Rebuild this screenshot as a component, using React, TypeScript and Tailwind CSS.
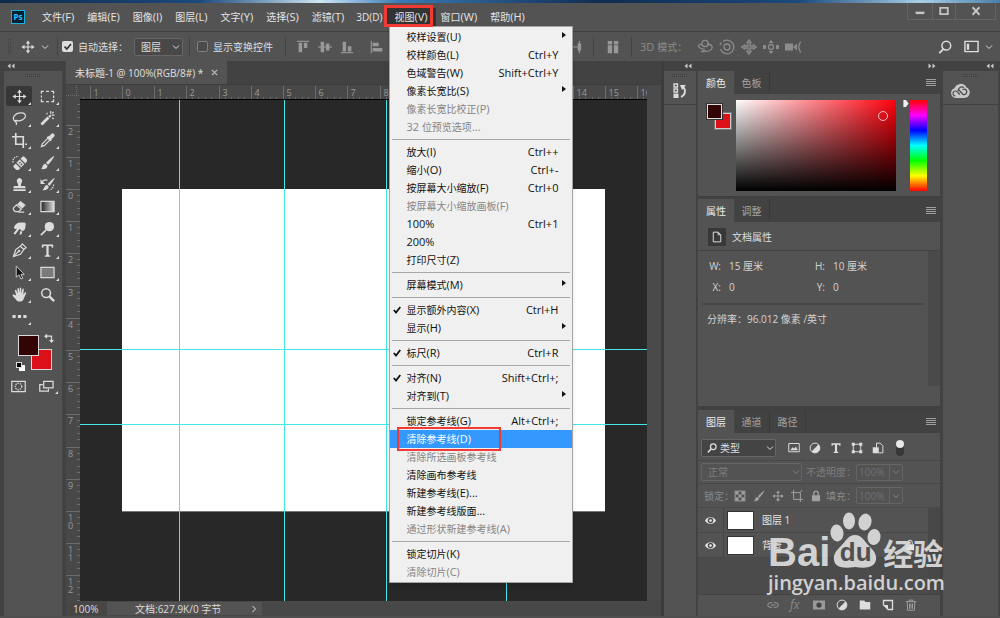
import React from "react";

type Kids = { children?: React.ReactNode };

const Ic = ({ s = "size-4", children }: Kids & { s?: string }) => (
  <svg viewBox="0 0 16 16" className={`${s} shrink-0`} fill="none" stroke="currentColor" strokeWidth="1.3" aria-hidden="true">
    {children}
  </svg>
);

const Chevron = ({ className = "" }: { className?: string }) => (
  <svg viewBox="0 0 8 6" className={`h-[6px] w-2 shrink-0 ${className}`} fill="none" stroke="currentColor" aria-hidden="true">
    <path d="M1 1.500 4 4.500 7 1.500" />
  </svg>
);

const DoubleChevron = ({ right = false }: { right?: boolean }) => (
  <svg viewBox="0 0 8 6" className={`h-[6px] w-2 text-[#c8c8c8] ${right ? "rotate-180" : ""}`} fill="currentColor" aria-hidden="true">
    <path d="M3.500 0.500v5L.5 3zM7.500 .5v5L4.500 3z" />
  </svg>
);

const Burger = () => (
  <button aria-label="面板菜单" className="text-[#a0a0a0]">
    <svg viewBox="0 0 10 8" className="h-2 w-[10px]" stroke="currentColor" aria-hidden="true">
      <path d="M0 .5h10M0 2.500h10M0 4.500h10M0 6.500h10" />
    </svg>
  </button>
);

const Grip = () => (
  <div className="flex h-[6px] items-end justify-center text-[#3e3e3e]">
    <svg viewBox="0 0 16 3" className="h-[3px] w-4" stroke="currentColor" strokeDasharray="1 1" aria-hidden="true">
      <path d="M0 .5h16M0 2.500h16" />
    </svg>
  </div>
);

const moveIcon = (
  <>
    <path d="M8 3v10M3 8h10" />
    <path d="M8 .5 5.500 4h5zM8 15.500 5.500 12h5zM.5 8 4 5.500v5zM15.500 8 12 5.500v5z" fill="currentColor" stroke="none" />
  </>
);

const solid = { fill: "currentColor", stroke: "none" } as const;

const tools: { name: string; more?: boolean; icon: React.ReactNode }[] = [
  { name: "移动工具", icon: moveIcon },
  { name: "矩形选框工具", icon: <path d="M1.500 5V2.500H4M6.500 2.500h3M12 2.500h2.500V5M14.500 7v2.500M14.500 11v2.500H12M9.500 13.500h-3M4 13.500H1.500V11M1.500 9V7" /> },
  { name: "套索工具", icon: <path d="M4.500 11.500C1 10.500.5 7 3 4.500s8-3.500 10.500-1.500c2 2 .5 5-2.500 6.500-2 1-4.500 1.500-6.500.5-1.500-.5-2 1-1 1.500s2 .5 1 3.500" /> },
  { name: "魔棒工具", icon: <><path d="M1.500 14.500 9 7" strokeWidth="3" /><path d="m9.500 6.500 2-2" strokeWidth="2" /><path d="M11.500 0v3M15.500 4.500h-3M14.500 1l-1.500 1.500M7 2l1 1.500M13 7l1.500 1.500" /></> },
  { name: "裁剪工具", icon: <path d="M4 0v12h8.500M0 4h12v12M14 12h2" strokeWidth="1.800" /> },
  { name: "吸管工具", icon: <><path d="M9 5 2.500 11.500 1.500 14.500l3-1L11 7" /><path d="m8 4 4 4" strokeWidth="2.200" /><path d="m10.500 5.500 3-3" strokeWidth="4" strokeLinecap="round" /></> },
  { name: "修复画笔工具", icon: <><g transform="rotate(-45 9 9)"><rect x="1" y="5.500" width="16" height="7" rx="1.500" {...solid} /><path d="M6 5.500v7M12 5.500v7" stroke="#535353" /><path d="M8 8h2M8 10.500h2" stroke="#535353" /></g><path d="M1 8C.5 4 3 1.500 7 1.500" strokeDasharray="1.500 1" /></> },
  { name: "画笔工具", icon: <><path d="M15 1.200c.5.5-4 6.800-6.500 9.300L6.500 8.500C9 5.500 14.500.7 15 1.200z" {...solid} /><path d="M5.800 9.200 8 11.400c0 3-3 4-7 3.600 2-1 1.500-5.800 4.800-5.800z" {...solid} /></> },
  { name: "仿制图章工具", icon: <path d="M8 1a3 3 0 0 1 2.500 4.500L9.500 8v1.500H13c1 0 1.500.5 1.500 2.500h-13c0-2 .5-2.500 1.500-2.500h3.500V8l-1-2.500A3 3 0 0 1 8 1zM1.500 13h13v2h-13z" {...solid} /> },
  { name: "历史记录画笔工具", icon: <><path d="M15.500 1c.5.5-3 6-5.500 8.500L8 7.500C10.500 5 15 .5 15.500 1zM7.500 8.500l1.800 1.800C9 13 6 14.500 2.500 14c2-1 2-5 5-5.500z" {...solid} /><path d="M8 3.500C5 2.500 3 3.500 2 5.500" /><path d="M.5 2.500v5h5z" {...solid} /><path d="M14.500 8c0 3-2 5-4.500 6" strokeDasharray="1.500 1" /></> },
  { name: "橡皮擦工具", icon: <><path d="m9 2 5.500 4.500L11 10 5.500 5.500z" {...solid} /><path d="M4.800 6.300 10 10.700 7 13.500H3.500L1.500 11.500v-2z" /><path d="M7 14h6" /></> },
  { name: "渐变工具", icon: <><defs><linearGradient id="tool-grad"><stop stopColor="#222" /><stop offset="1" stopColor="#ddd" /></linearGradient></defs><rect x="1" y="2.500" width="14" height="11" fill="url(#tool-grad)" /></> },
  { name: "涂抹工具", icon: <path d="M2.500 5.500C4 3 6 1.500 9 1.500h4c1.500 0 2 1.500 1.500 3L14 8c-.5 2-2 3-3.500 2.500L8 8.500l-4.500 6-2-1L5.500 8l-1 .5C3 9 1.500 7.500 2.500 5.500zM9 10.500l2 1-1 3H8z" {...solid} /> },
  { name: "减淡工具", icon: <><circle cx="10" cy="6" r="5" {...solid} /><path d="M6.500 9.500 1 15" strokeWidth="1.800" /></> },
  { name: "钢笔工具", icon: <><path d="M1.500 14.500 4 7l5-3.500 3.500 3.500L9 12zM9 3.500 11 1l4 4-2.500 2" /><path d="M1.500 14.500 7 9" /><circle cx="7.500" cy="8.500" r="1.300" {...solid} /></> },
  { name: "文字工具", icon: <path d="M2 1.500h12V5h-1.300L12 3.300H9.200v9.500l1.800.7v1.200H5v-1.200l1.800-.7V3.300H4L3.300 5H2z" {...solid} /> },
  { name: "路径选择工具", icon: <path d="M4.500 1v12l3-2.500 2 4.500 2-1-2-4h3.500z" fill="#141414" stroke="#cfcfcf" strokeWidth="1" /> },
  { name: "矩形工具", icon: <rect x="1" y="2.500" width="14" height="11" fill="#7b7b7b" /> },
  { name: "抓手工具", icon: <path d="M4.500 9 3.200 4.200c-.3-1.200 1.200-1.600 1.600-.5L6 7 5.700 2c0-1.300 1.600-1.300 1.700 0L7.800 6.500 8.200 1.500c.1-1.200 1.700-1.200 1.700 0V6.800l1.100-4.500c.3-1.100 1.800-.8 1.600.4L12 8.200l1.500-2c.7-1 2-.3 1.500.8L12.500 12.500C11.500 15 10.500 15.500 8 15.500c-2 0-3-.8-4-2.500L.8 9.500c-.8-1 .6-2 1.600-1.200z" {...solid} /> },
  { name: "缩放工具", more: false, icon: <><circle cx="6.500" cy="6.500" r="4.700" strokeWidth="1.600" /><path d="m10 10 5 5" strokeWidth="2.600" /></> },
  { name: "编辑工具栏", icon: <path d="M.5 6.300h3.400v3.400H.5zM6.300 6.300h3.400v3.400H6.300zM12.100 6.300h3.400v3.400h-3.400z" {...solid} /> },
];

type Item = { label?: string; mnemonic?: string; latin?: string; keys?: string; sub?: boolean; off?: boolean; check?: boolean; on?: boolean };

const viewMenu: (Item | null)[] = [
  { label: "校样设置", mnemonic: "(U)", sub: true },
  { label: "校样颜色", mnemonic: "(L)", keys: "Ctrl+Y" },
  { label: "色域警告", mnemonic: "(W)", keys: "Shift+Ctrl+Y" },
  { label: "像素长宽比", mnemonic: "(S)", sub: true },
  { label: "像素长宽比校正", mnemonic: "(P)", off: true },
  { latin: "32 ", label: "位预览选项", mnemonic: "...", off: true },
  null,
  { label: "放大", mnemonic: "(I)", keys: "Ctrl++" },
  { label: "缩小", mnemonic: "(O)", keys: "Ctrl+-" },
  { label: "按屏幕大小缩放", mnemonic: "(F)", keys: "Ctrl+0" },
  { label: "按屏幕大小缩放画板", mnemonic: "(F)", off: true },
  { latin: "100%", keys: "Ctrl+1" },
  { latin: "200%" },
  { label: "打印尺寸", mnemonic: "(Z)" },
  null,
  { label: "屏幕模式", mnemonic: "(M)", sub: true },
  null,
  { label: "显示额外内容", mnemonic: "(X)", keys: "Ctrl+H", check: true },
  { label: "显示", mnemonic: "(H)", sub: true },
  null,
  { label: "标尺", mnemonic: "(R)", keys: "Ctrl+R", check: true },
  null,
  { label: "对齐", mnemonic: "(N)", keys: "Shift+Ctrl+;", check: true },
  { label: "对齐到", mnemonic: "(T)", sub: true },
  null,
  { label: "锁定参考线", mnemonic: "(G)", keys: "Alt+Ctrl+;" },
  { label: "清除参考线", mnemonic: "(D)", on: true },
  { label: "清除所选画板参考线", off: true },
  { label: "清除画布参考线" },
  { label: "新建参考线", mnemonic: "(E)..." },
  { label: "新建参考线版面", mnemonic: "..." },
  { label: "通过形状新建参考线", mnemonic: "(A)", off: true },
  null,
  { label: "锁定切片", mnemonic: "(K)" },
  { label: "清除切片", mnemonic: "(C)", off: true },
];

const ViewMenu = () => (
  <div role="menu" className="absolute top-full left-px z-20 w-[184px] border border-[#a5a5a5] bg-[#f0f0f0] py-px text-[#111] shadow-md">
    {viewMenu.map((it, i) =>
      it === null ? (
        <div key={i} role="separator" className="flex h-[7px] items-center px-[2px]">
          <div className="h-px w-full bg-[#a8a8a8]" />
        </div>
      ) : (
        <button
          key={i}
          role="menuitem"
          disabled={it.off}
          className={`relative flex h-[18px] w-full items-center pr-[14px] pl-4 text-left ${it.on ? "bg-[#3399ff] text-white" : it.off ? "text-[#858585]" : ""}`}
        >
          {it.check && (
            <svg viewBox="0 0 8 8" className="absolute left-[3px] size-2" fill="none" stroke="currentColor" strokeWidth="1.8" aria-hidden="true">
              <path d="M.8 4 3 6.500 7.300 1" />
            </svg>
          )}
          <span className="flex-1 whitespace-nowrap">
            {it.latin && <span className="text-[11px]">{it.latin}</span>}
            {it.label}
            {it.mnemonic && <span className="text-[11px]">{it.mnemonic}</span>}
          </span>
          {it.keys && <span className="text-[11px] whitespace-nowrap">{it.keys}</span>}
          {it.sub && (
            <svg viewBox="0 0 4 6" className="absolute top-[4px] right-[6px] h-[6px] w-1" fill="currentColor" aria-hidden="true">
              <path d="M0 0v6l4-3z" />
            </svg>
          )}
          {it.on && <span className="absolute -inset-y-[3px] left-[7px] z-10 w-[104px] border-2 border-[#f23a34]" />}
        </button>
      ),
    )}
  </div>
);

const menus: [string, string][] = [
  ["文件", "(F)"], ["编辑", "(E)"], ["图像", "(I)"], ["图层", "(L)"], ["文字", "(Y)"], ["选择", "(S)"],
  ["滤镜", "(T)"], ["", "3D(D)"], ["视图", "(V)"], ["窗口", "(W)"], ["帮助", "(H)"],
];

const TitleBar = () => (
  <header className="flex h-7 items-center bg-[#535353] pl-[11px] text-[#e4e4e4]">
    <div className="flex size-[14px] items-center justify-center border border-[#19b3e0] bg-[#06202e] text-[8px] font-bold text-[#26c9ff]">Ps</div>
    <nav className="ml-[11px] flex gap-px">
      {menus.map(([cjk, key]) => (
        <div key={key} className="relative">
          <button className={`flex h-[18px] items-center whitespace-nowrap ${cjk === "视图" ? "-mx-[3px] bg-[#333] px-[9px]" : cjk ? "px-[6px]" : "px-[5px]"}`}>
            {cjk}
            <span className={cjk ? "text-[11px]" : "text-[10px]"}>{key}</span>
          </button>
          {cjk === "视图" && (
            <>
              <ViewMenu />
              <span className="pointer-events-none absolute -top-[3px] right-0 -bottom-px -left-1 z-30 border-3 border-[#f23a34]" />
            </>
          )}
        </div>
      ))}
    </nav>
    <div className="mr-1 ml-auto flex h-[17px] self-start border border-t-0 border-[#646464] text-[#c4c4c4]">
      <button aria-label="最小化" className="flex w-6 items-center justify-center"><Ic s="size-[10px]"><path d="M1 11h14" strokeWidth="4" /></Ic></button>
      <button aria-label="最大化" className="flex w-6 items-center justify-center border-x border-[#646464]"><Ic s="size-[10px]"><path d="M2 3h12v10H2z" strokeWidth="3" /></Ic></button>
      <button aria-label="关闭" className="flex w-[39px] items-center justify-center"><Ic s="size-[10px]"><path d="m2.500 2 11 12M13.500 2l-11 12" strokeWidth="3" /></Ic></button>
    </div>
  </header>
);

const alignIcons: React.ReactNode[] = [
  <path d="M1 1.500h14" />,
  <path d="M0 8h16" />,
  <path d="M1 14.500h14" />,
  <path d="M1.500 1v14" />,
  <path d="M8 0v16" />,
  <path d="M14.500 1v14" />,
  <path d="M1 1.500h14M1 8h14" />,
  <path d="M1 8h14M1 14h14" />,
  <path d="M1.500 1v14M8 1v14" />,
  <path d="M3 1v14M13 1v14M3 8h10" />,
];
const alignBars: string[] = [
  "M3 3h4v11H3zM9 3h4v6H9z", "M3 2h4v12H3zM9 4h4v8H9z", "M3 2h4v11H3zM9 7h4v6H9z",
  "M3 3h7v4H3zM3 9h11v4H3z", "M4 2h8v4H4zM2 9h12v4H2z", "M6 3h7v4H6zM2 9h11v4H2z",
  "M4 3h8v3H4zM4 10h8v3H4z", "M4 3h8v3H4zM4 10h8v3H4z", "M3 4h3v8H3zM10 4h3v8h-3z", "M1 4h4v8H1zM11 4h4v8h-4z",
];
const AlignIcon = ({ i }: { i: number }) => (
  <button aria-label={`对齐方式 ${i + 1}`}>
    <Ic s="size-[14px]">
      {alignIcons[i]}
      <path d={alignBars[i]} {...solid} />
    </Ic>
  </button>
);

const Divider = () => <div className="h-5 w-px bg-[#434343]" />;

const OptionsBar = () => (
  <div className="flex h-[30px] items-center border-t border-[#404040] bg-[#535353] pl-2 text-[#dedede]">
    <svg viewBox="0 0 3 16" className="h-4 w-[3px] text-[#404040]" stroke="currentColor" strokeDasharray="1 1" aria-hidden="true"><path d="M.5 0v16M2.500 0v16" /></svg>
    <span className="ml-[10px]"><Ic s="size-[14px]">{moveIcon}</Ic></span>
    <Chevron className="mr-2 ml-[6px]" />
    <Divider />
    <label className="ml-1 flex items-center gap-[5px] whitespace-nowrap">
      <span className="relative flex size-[11px]">
        <input type="checkbox" defaultChecked className="size-[11px] appearance-none rounded-xs bg-[#dcdcdc]" />
        <svg viewBox="0 0 11 11" className="pointer-events-none absolute inset-0 size-[11px]" fill="none" stroke="#333" strokeWidth="1.700" aria-hidden="true"><path d="m2.500 5.500 2.300 2.500L9 3" /></svg>
      </span>
      自动选择：
    </label>
    <span className="relative ml-[6px] flex items-center">
      <select aria-label="自动选择" className="h-[18px] w-[49px] appearance-none rounded-xs border border-[#666] bg-[#484848] pl-[6px]">
        <option>图层</option>
        <option>组</option>
      </select>
      <Chevron className="pointer-events-none absolute right-[3px]" />
    </span>
    <span className="mr-[7px] ml-[6px]"><Divider /></span>
    <label className="flex items-center gap-[5px] whitespace-nowrap">
      <input type="checkbox" className="size-[11px] appearance-none rounded-xs border border-[#808080] bg-[#4b4b4b]" />
      显示变换控件
    </label>
    <span className="ml-3"><Divider /></span>
    <div className="ml-[10px] flex gap-2 text-[#989898]">
      {[0, 1, 2].map((i) => <AlignIcon key={i} i={i} />)}
    </div>
    <div className="ml-4 flex gap-2 text-[#989898]">
      {[3, 4, 5, 0, 1, 2, 6, 7, 8, 9].map((i) => <AlignIcon key={i} i={i} />)}
    </div>
    <span className="mr-3 ml-[11px]"><Divider /></span>
    <button aria-label="自动对齐图层" className="text-[#989898]"><Ic s="size-[14px]"><path d="M2 1h5v4H2zM2 6h5v9H2zM9 1h5v4H9zM9 6h5v9H9z" {...solid} /></Ic></button>
    <span className="mr-2 ml-[11px]"><Divider /></span>
    <div className="flex items-center gap-[6px] whitespace-nowrap text-[#8c8c8c]">
      <span className="mr-1"><span className="text-[11px]">3D </span>模式：</span>
      <Ic><path d="M6 10C0 8.500 0 5 5 5.500M10 5c5 0 7 4 3 6.500-2 1-5 1-6 0l-2 1M7 9.500v3h-3" /><circle cx="8" cy="4.500" r="3.200" /></Ic>
      <Ic><circle cx="8" cy="8" r="3" /><path d="M4 2.500A6.800 6.800 0 1 1 1.500 10M1 6a7 7 0 0 1 1.500-2.500" /></Ic>
      <Ic><path d="M8 .8 10 3.500H9v3.500h3.500V6l2.700 2-2.700 2V9H9v3.500h1L8 15.200 6 12.500h1V9H3.500v1L.8 8l2.700-2v1H7V3.500H6z" /></Ic>
      <Ic><path d="M8 1 5.500 4h5zM8 15l-2.500-3h5z" {...solid} /><circle cx="8" cy="8" r="2.500" /><path d="M0 8h3M13 8h3" strokeWidth="4" /></Ic>
      <Ic><path d="M0 4.500h8v7H0zM8 8l4-3.500v7z" {...solid} /><path d="M15.500 2.500 13.500 8l2 5.500" /></Ic>
    </div>
    <div className="mr-[7px] ml-auto flex items-center">
      <button aria-label="搜索"><Ic s="size-[14px]"><circle cx="9.500" cy="6.500" r="5" strokeWidth="1.700" /><path d="M6 10.500 1.500 15" strokeWidth="2.200" /></Ic></button>
      <button aria-label="工作区" className="ml-3 flex items-center gap-[6px]"><Ic s="size-[15px]"><path d="M1 2.500h14v11H1z" strokeWidth="1.500" /><path d="M3 5h2.500v6.500H3z" {...solid} /></Ic><Chevron /></button>
    </div>
  </div>
);

const Toolbox = () => (
  <aside className="flex w-[59px] flex-col border-l border-[#424242] bg-[#535353]">
    <div className="flex h-[10px] items-center bg-[#424242] pl-[3px]"><DoubleChevron /></div>
    <Grip />
    <div className="mt-[9px] grid grid-cols-2 gap-y-[2px] pl-[2px] text-[#dcdcdc]">
      {tools.map((t, i) => (
        <button key={t.name} aria-label={t.name} className={`relative flex h-5 w-[26px] items-center justify-center rounded-xs ${i === 0 ? "bg-[#373737]" : ""}`}>
          <Ic s="size-[15px]">{t.icon}</Ic>
          {t.more !== false && (
            <svg viewBox="0 0 3 3" className="absolute right-px bottom-px size-[3px]" fill="currentColor" aria-hidden="true"><path d="M3 0v3H0z" /></svg>
          )}
        </button>
      ))}
    </div>
    <div className="mt-[9px] flex h-[36px] pl-[11px]">
      <div className="relative w-[40px] text-[#dcdcdc]">
        <button aria-label="背景色" className="absolute top-[14px] left-[16px] size-[21px] border border-[#d8d8d8] bg-[#dc1018]" />
        <button aria-label="前景色" className="absolute top-0 left-[3px] size-[21px] border border-[#d8d8d8] bg-[#330406]" />
        <svg viewBox="0 0 16 16" className="absolute -top-[2px] left-[29px] size-[10px]" fill="none" stroke="currentColor" strokeWidth="2" aria-hidden="true"><path d="M3 5h9v8" /><path d="M0 5l5-4v8zM12 16l-4-5h8z" {...solid} /></svg>
        <span className="absolute top-[30px] left-[4px] size-[6px] border border-white bg-white" />
        <span className="absolute top-[27px] left-px size-[6px] border border-[#ddd] bg-black" />
      </div>
    </div>
    <div className="mt-[8px] flex gap-[13px] pl-[7px] text-[#dcdcdc]">
      <button aria-label="快速蒙版"><Ic s="size-[15px]"><path d="M.8 2.500h14.400v11H.8z" /><circle cx="8" cy="8" r="3.500" strokeDasharray="1.500 1" /></Ic></button>
      <button aria-label="屏幕模式" className="relative">
        <Ic s="size-[15px]"><path d="M5 2.500h10v7H5z" /><path d="M4 6H.8v7H10v-2.500" /></Ic>
        <svg viewBox="0 0 3 3" className="absolute -right-1 bottom-0 size-[3px]" fill="currentColor" aria-hidden="true"><path d="M3 0v3H0z" /></svg>
      </button>
    </div>
  </aside>
);

const pitch = 32.2;
const topMarks = Array.from({ length: 18 }, (_, i) => i - 1);
const sideMarks = Array.from({ length: 16 }, (_, i) => i - 3);

const RulerTop = () => (
  <svg className="h-[14px] min-w-0 flex-1 overflow-hidden bg-[#484848]" aria-hidden="true">
    <path d="M3.500 12v2" stroke="#6c6c6c" />
    {topMarks.map((k) => {
      const x = Math.round(42 + k * pitch) + 0.5;
      return (
        <g key={k}>
          <path d={`M${x} 1v14`} stroke="#6c6c6c" />
          <path d={`M${x + 6} 12v2m6-2v2m7-2v2m6-2v2`} stroke="#6c6c6c" />
          <text x={x + 3} y="11" fontSize="9" fill="#999">{Math.abs(k)}</text>
        </g>
      );
    })}
  </svg>
);

const RulerSide = () => (
  <svg className="w-[14px] shrink-0 bg-[#484848]" aria-hidden="true">
    {sideMarks.map((k) => {
      const y = Math.round(90 + k * pitch) + 0.5;
      return (
        <g key={k}>
          <path d={`M0 ${y}h14M11 ${y + 6}h3m-3 6h3m-3 7h3m-3 6h3`} stroke="#6c6c6c" />
          {k > -3 &&
            String(Math.abs(k)).split("").map((d, j) => (
              <text key={j} x="2" y={y + 9 + j * 8} fontSize="9" fill="#999">{d}</text>
            ))}
        </g>
      );
    })}
  </svg>
);

const Guide = ({ at }: { at: string }) => <div className={`absolute bg-[#45e6e8] ${at}`} />;

const Doc = () => (
  <main className="flex min-w-0 flex-1 flex-col bg-[#424242]">
    <div className="flex h-6 border-b border-[#3c3c3c]">
      <div className="flex items-center bg-[#535353] px-[9px] text-[11px] whitespace-nowrap text-[#e0e0e0]">
        <span className="text-[10px]">未标题-1 @ 100%(RGB/8#) *</span>
        <button aria-label="关闭文档" className="ml-2 text-[#bbb]"><Ic s="size-[7px]"><path d="m2 2 12 12M14 2 2 14" strokeWidth="3" /></Ic></button>
      </div>
    </div>
    <div className="flex min-h-0 flex-1">
      <div className="flex min-w-0 flex-1 flex-col">
        <div className="flex">
          <svg viewBox="0 0 14 14" className="size-[14px] bg-[#484848]" stroke="#6c6c6c" strokeDasharray="1 1" aria-hidden="true"><path d="M10.500 0v14M0 10.500h14" /></svg>
          <RulerTop />
        </div>
        <div className="flex min-h-0 flex-1">
          <RulerSide />
          <div className="relative flex-1 overflow-hidden border-t border-black bg-[#282828]">
            <div className="absolute top-[89px] left-[42px] h-[322px] w-[483px] bg-white shadow-[0_1px_0_#777]" />
            <Guide at="inset-y-0 left-[99px] w-px" />
            <Guide at="inset-y-0 left-[204px] w-px" />
            <Guide at="inset-y-0 left-[306px] w-px" />
            <Guide at="inset-y-0 left-[426px] w-px" />
            <Guide at="inset-x-0 top-[249px] h-px" />
            <Guide at="inset-x-0 top-[324px] h-px" />
          </div>
        </div>
      </div>
      <div className="w-[14px] bg-[#4a4a4a]" />
    </div>
    <div className="flex h-[15px] items-center bg-[#484848] text-[11px] text-[#dcdcdc]">
      <span className="flex h-[13px] w-[41px] items-center bg-[#464646] pl-[7px] text-[10px]">100%</span>
      <div className="flex h-[13px] w-[155px] items-center justify-between bg-[#535353] pr-1 pl-[28px] whitespace-nowrap">
        <span className="text-[10px]">文档:627.9K/0 字节</span>
        <Chevron className="-rotate-90" />
      </div>
    </div>
  </main>
);

const Tabs = ({ names }: { names: string[] }) => (
  <div role="tablist" className="flex h-[23px] shrink-0 bg-[#424242]">
    {names.map((n, i) => (
      <button key={n} role="tab" aria-selected={i === 0} className={`w-9 ${i === 0 ? "bg-[#535353] text-[#ececec]" : "border-r border-[#3a3a3a] text-[#a4a4a4]"}`}>
        {n}
      </button>
    ))}
    <div className="mr-1 ml-auto flex items-center"><Burger /></div>
  </div>
);

const ColorPanel = () => (
  <section>
    <Tabs names={["颜色", "色板"]} />
    <div className="flex h-[103px] border-b border-[#3e3e3e] pt-[6px] pl-[9px]">
      <div className="relative mt-[4px] w-[29px]">
        <button aria-label="背景色" className="absolute top-[9px] left-[8px] size-[16px] border border-[#ccc] bg-[#dc1018] outline outline-[#777]" />
        <button aria-label="前景色" className="absolute top-0 left-0 size-[15px] border border-[#ddd] bg-[#330406] outline outline-[#333]" />
      </div>
      <div className="relative h-[91px] flex-1 bg-[linear-gradient(to_top,#000,transparent),linear-gradient(to_right,#fff,#ff000c)]">
        <span className="absolute top-[11px] right-[8px] size-[10px] rounded-full border border-[#ffc0c4]" />
      </div>
      <svg viewBox="0 0 6 8" className="mr-px ml-[7px] h-[7px] w-[6px]" fill="#eee" aria-hidden="true"><path d="M0 0h3l3 4-3 4H0z" /></svg>
      <div className="mr-[13px] h-[91px] w-[17px] bg-[linear-gradient(to_bottom,#f00,#f0f,#00f,#0ff,#0f0,#ff0,#f00)]" />
    </div>
  </section>
);

const Field = ({ k, v, u }: { k: string; v: string; u?: string }) => (
  <div className="flex">
    <span className="w-[15px] text-right">{k}:</span>
    <span className="ml-2">{v} {u}</span>
  </div>
);

const PropsPanel = () => (
  <section>
    <Tabs names={["属性", "调整"]} />
    <div className="flex h-[29px] items-center gap-[6px] border-b border-[#434343] pt-[2px] pl-[10px] text-[#dedede]">
      <span className="flex size-[18px] items-center justify-center bg-[#383838]"><Ic s="size-[12px]"><path d="M3 1.500h6.500L13 5v9.500H3zM9.500 1.500V5H13" /></Ic></span>
      文档属性
    </div>
    <div className="flex h-[155px] text-[#d4d4d4]">
      <div className="flex-1 px-1">
        <div className="grid grid-cols-[104px_1fr] gap-y-[5px] border-b-2 border-[#484848] pt-[7px] pb-2 pl-1">
          <Field k="W" v="15" u="厘米" />
          <Field k="H" v="10" u="厘米" />
          <Field k="X" v="0" />
          <Field k="Y" v="0" />
        </div>
        <p className="pt-[6px] pl-[5px]">分辨率：96.012 像素 /英寸</p>
      </div>
      <div className="h-[135px] w-3 bg-[#4a4a4a]" />
    </div>
  </section>
);

const Percent = ({ id, label }: { id: string; label: string }) => (
  <>
    <label htmlFor={id} className="ml-auto">{label}：</label>
    <span className="flex h-[17px] rounded-xs border border-[#656565]">
      <input id={id} defaultValue="100%" disabled className="w-8 bg-transparent pl-[2px] text-[10px] text-[#707070]" />
      <span className="flex w-[13px] items-center justify-center border-l border-[#656565]"><Chevron /></span>
    </span>
  </>
);

const Eye = () => (
  <Ic s="size-[11px]"><path d="M0 8c3-6.500 13-6.500 16 0-3 6.500-13 6.500-16 0z" {...solid} /><circle cx="8" cy="8" r="4" fill="#4a4a4a" stroke="none" /><circle cx="8" cy="8" r="2" {...solid} /></Ic>
);

const halfCircle = <><circle cx="8" cy="8" r="6.500" /><path d="M12.600 3.400A6.500 6.500 0 0 1 3.400 12.600z" {...solid} /></>;

const LayersPanel = () => (
  <section className="flex min-h-0 flex-1 flex-col">
    <Tabs names={["图层", "通道", "路径"]} />
    <div className="flex h-7 shrink-0 items-center border-b border-[#484848] pt-[3px] pl-[3px] text-[#dedede]">
      <span className="relative flex items-center">
        <span className="pointer-events-none absolute left-[6px]"><Ic s="size-[10px]"><circle cx="10" cy="6" r="4.500" strokeWidth="2" /><path d="M6.500 9.500 1.500 15" strokeWidth="2.500" /></Ic></span>
        <select aria-label="过滤类型" className="h-[18px] w-[75px] appearance-none rounded-xs border border-[#666] bg-[#444] pl-[18px]"><option>类型</option></select>
        <Chevron className="pointer-events-none absolute right-[2px]" />
      </span>
      <div className="ml-3 flex gap-[9px]">
        <Ic s="size-3"><path d="M1 2h14v11H1z" /><path d="m3 11 3-4 2 2 2.500-3L13 11z" {...solid} /></Ic>
        <Ic s="size-3">{halfCircle}</Ic>
        <Ic s="size-3"><path d="M2 1.500h12V5h-1.300L12 3.500H9.400v9l1.600.8v1.200H5v-1.200l1.600-.8v-9H4L3.300 5H2z" {...solid} /></Ic>
        <Ic s="size-3"><path d="M3 3h10v10H3z" /><path d="M1 1h4v4H1zM11 1h4v4h-4zM1 11h4v4H1zM11 11h4v4h-4z" {...solid} /></Ic>
        <Ic s="size-3"><path d="M6 7V1.500h5L14.500 5v9.500H9" /><path d="M1 7h8v8H1z" {...solid} /></Ic>
      </div>
      <button role="switch" aria-checked="true" aria-label="图层过滤" className="ml-3 flex h-4 w-2 items-start rounded-full bg-[#383838]"><span className="size-2 rounded-full bg-[#e8e8e8]" /></button>
    </div>
    <div className="flex h-[23px] shrink-0 items-center border-b border-[#484848] pr-[37px] pl-[3px] text-[#7e7e7e]">
      <span className="relative flex items-center">
        <select aria-label="混合模式" disabled className="h-[18px] w-[101px] appearance-none rounded-xs border border-[#656565] pl-[6px]"><option>正常</option></select>
        <Chevron className="pointer-events-none absolute right-[2px]" />
      </span>
      <Percent id="opacity" label="不透明度" />
    </div>
    <div className="flex h-6 shrink-0 items-center border-b border-[#4a4a4a] pr-[37px] pl-[6px] text-[#8a8a8a]">
      锁定：
      <span className="flex gap-[7px] text-[#a2a2a2]">
        <Ic s="size-3"><path d="M1.500 1.500h13v13h-13z" /><path d="M2 2h4v4H2zM10 2h4v4h-4zM6 6h4v4H6zM2 10h4v4H2zM10 10h4v4h-4z" {...solid} /></Ic>
        <Ic s="size-3">{tools[7].icon}</Ic>
        <Ic s="size-3">{moveIcon}</Ic>
        <Ic s="size-3"><path d="M3.500 0v12.500H16M0 3.500h12.500V16M12 3l3-3" /></Ic>
        <Ic s="size-3"><path d="M2.500 7h11v8h-11z" {...solid} /><path d="M5 7V4.500a3 3 0 0 1 6 0V7" strokeWidth="1.800" /></Ic>
      </span>
      <Percent id="fill" label="填充" />
    </div>
    <div className="flex min-h-0 flex-1 bg-[#4b4b4b]">
      <ul className="flex-1 text-[#e4e4e4]">
        {["图层 1", "背景"].map((n) => (
          <li key={n} className="flex h-[25px] items-center border-b border-[#474747] bg-[#535353]">
            <button aria-label="可见性" className="flex h-full w-[26px] items-center justify-center border-r border-[#474747]"><Eye /></button>
            <span className="mr-2 ml-[3px] h-[19px] w-[27px] border border-[#333] bg-white" />
            {n}
            {n === "背景" && <span className="mr-3 ml-auto"><Ic s="size-3"><path d="M2.500 7h11v8h-11z" {...solid} /><path d="M5 7V4.500a3 3 0 0 1 6 0V7" /></Ic></span>}
          </li>
        ))}
      </ul>
      <div className="w-3 bg-[#484848]" />
    </div>
    <div className="flex h-[22px] shrink-0 items-center justify-end gap-[11px] border-t border-[#434343] pr-[23px] pb-px text-[#dedede]">
      <Ic s="size-3"><g opacity=".5"><path d="M7 5H4a3 3 0 0 0 0 6h3M9 5h3a3 3 0 0 1 0 6H9M5 8h6" /></g></Ic>
      <span className="w-3 text-[12px] text-[#8a8a8a] italic">fx</span>
      <Ic s="size-3"><g opacity=".5"><path d="M0 2h16v12H0z" {...solid} /><circle cx="8" cy="8" r="3.500" fill="#333" stroke="none" /></g></Ic>
      <Ic s="size-3">{halfCircle}</Ic>
      <Ic s="size-3"><path d="M1 2h6l1.500 2H15v10H1z" {...solid} /></Ic>
      <Ic s="size-3"><path d="M2 8V2h12v12H8" strokeWidth="1.800" /><path d="M1 8h7v7z" {...solid} /></Ic>
      <Ic s="size-3"><g opacity=".55"><path d="M1 3.500h14M5.500 3V1.500h5V3M3 4l.5 11h9L13 4M6 6v7M8 6v7M10 6v7" /></g></Ic>
    </div>
  </section>
);

const Watermark = () => (
  <div className="pointer-events-none absolute right-[54px] bottom-[22px] z-10 w-[178px] text-[#d9d9d9] opacity-95">
    <div className="flex items-end">
      <span className="font-['Liberation_Sans'] text-[40px] leading-[36px] font-bold">Bai</span>
      <span className="relative -ml-px mb-[2px] flex w-[53px] justify-center">
        <svg viewBox="0 0 51 56" className="h-[56px] w-[53px]" fill="currentColor" aria-hidden="true">
          <ellipse cx="7" cy="21" rx="6.500" ry="8.500" transform="rotate(-8 7 21)" />
          <ellipse cx="19" cy="9" rx="6" ry="8.500" />
          <ellipse cx="35" cy="10" rx="6.500" ry="8.500" transform="rotate(12 35 10)" />
          <ellipse cx="44" cy="25" rx="6.500" ry="8" transform="rotate(8 44 25)" />
          <path d="M25 23c7 0 9 6 14 11 4 4 8 8 7 14-2 9-12 8-21 7-9 1-20 2-21-7-1-6 3-10 7-14 5-5 7-11 14-11z" />
        </svg>
        <span className="absolute bottom-[4px] font-['Liberation_Sans'] text-[26px] leading-6 font-bold text-[#505050]">du</span>
      </span>
      <span className="ml-px text-[30px] leading-[33px] font-bold">经验</span>
    </div>
    <div className="text-[20px] leading-[26px] font-semibold whitespace-nowrap">jingyan.baidu.com</div>
  </div>
);

export default function App() {
  return (
    <div className="relative flex h-screen flex-col overflow-hidden bg-[#424242] font-['Open_Sans','Noto_Sans_CJK_SC',sans-serif] text-[10px] leading-4">
      <div className="h-[3px] shrink-0 bg-[linear-gradient(to_right,#0e2a4a,#1c4a7c_20%,#cfe6f5_32%,#3a7ab5_40%,#0f2c50_60%,#1c4a7c_80%,#a8d0e8_92%,#4a7ea8)]" />
      <TitleBar />
      <OptionsBar />
      <div className="flex min-h-0 flex-1 pr-[2px] pl-[3px]">
        <Toolbox />
        <div className="w-1" />
        <Doc />
        <div className="w-[3px] bg-[#3c3c3c]" />
        <aside className="flex w-8 flex-col bg-[#535353]">
          <div className="flex h-[10px] items-center justify-end bg-[#424242] pr-[4px]"><DoubleChevron /></div>
          <Grip />
          <button aria-label="历史记录" className="flex h-[28px] items-center justify-center border-b border-[#424242] text-[#dcdcdc]">
            <Ic><path d="M2 1h3.500v3H2zM2 6h3.500v3H2z" /><path d="M1.500 10.500h5V15h-5z" {...solid} /><path d="M9 14c5-2 5-8 1.500-10.500" strokeWidth="1.800" /><path d="M8 2h6l-4 5z" {...solid} /></Ic>
          </button>
        </aside>
        <div className="w-[2px]" />
        <aside className="flex w-[242px] flex-col bg-[#535353]">
          <div className="flex h-[10px] shrink-0 items-center justify-end bg-[#424242] pr-[4px]"><DoubleChevron right /></div>
          <ColorPanel />
          <div className="h-[2px] shrink-0 bg-[#424242]" />
          <PropsPanel />
          <div className="h-1 shrink-0 bg-[#404040]" />
          <LayersPanel />
        </aside>
        <div className="w-[3px]" />
        <aside className="flex w-[55px] flex-col bg-[#535353]">
          <div className="flex h-[10px] items-center justify-end bg-[#424242] pr-[4px]"><DoubleChevron /></div>
          <Grip />
          <button aria-label="Creative Cloud" className="flex h-[28px] items-center border-b border-[#424242] pl-[7px] text-[#c8c8c8]">
            <svg viewBox="0 0 20 16" className="h-4 w-5" aria-hidden="true">
              <path d="M5.500 15a5 5 0 0 1-1-9.700A6.500 6.500 0 0 1 16.500 4.500 5.500 5.500 0 0 1 14.500 15z" fill="currentColor" />
              <path d="M10 11.500 7.500 9a2.500 2.500 0 1 0-2 4M8 8a4 4 0 0 1 6-3.500M8.500 6.500l4.500 5a2.800 2.800 0 1 0-.5-5" fill="none" stroke="#4b4b4b" strokeWidth="1.200" />
            </svg>
          </button>
        </aside>
      </div>
      <div className="h-[2px] shrink-0 bg-[#4e4e4e]" />
      <Watermark />
    </div>
  );
}
